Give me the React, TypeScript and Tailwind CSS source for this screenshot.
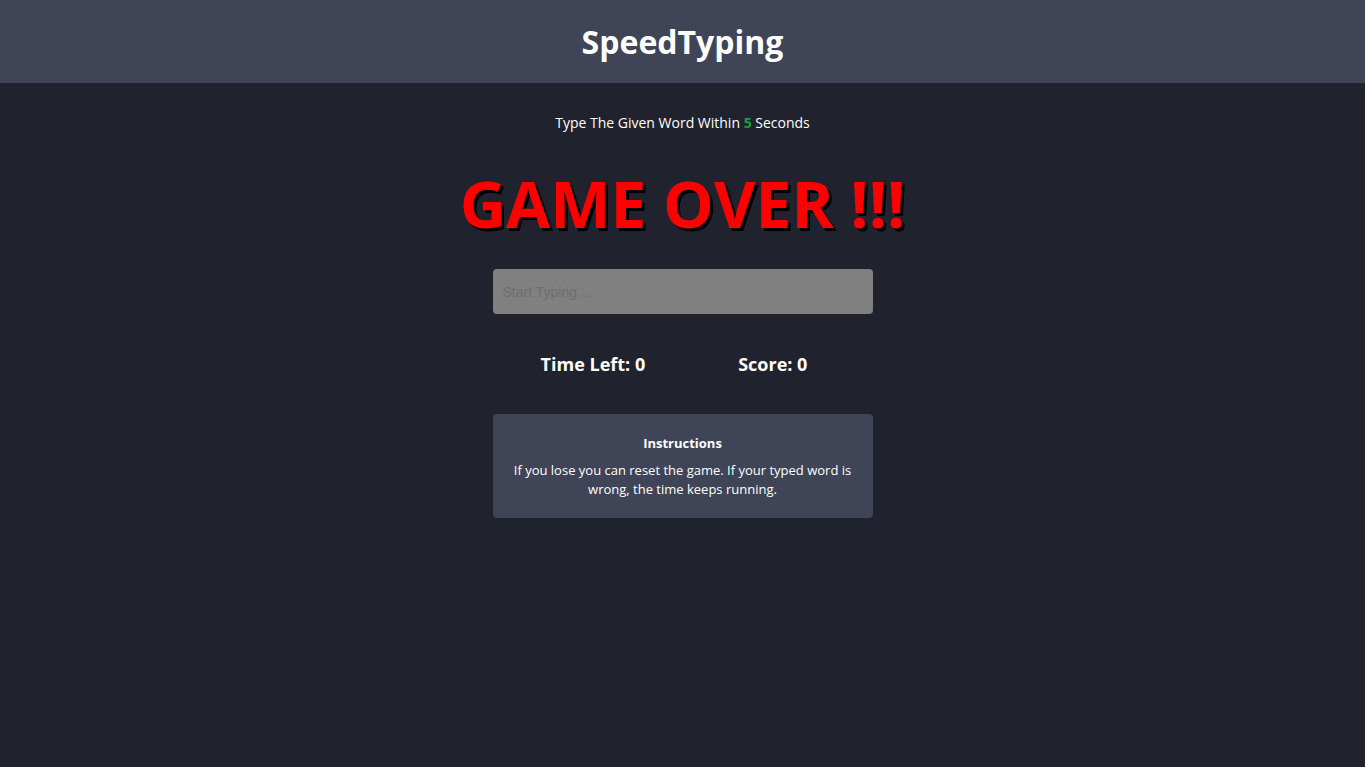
export default function App() {
  return (
    <div
      className="min-h-[767px] bg-[#20222e] text-white"
      style={{ fontFamily: '"Open Sans", sans-serif' }}
    >
      <header className="flex h-[83px] items-center justify-center bg-[#3f4457]">
        <h1 className="text-[32px] font-bold leading-none">SpeedTyping</h1>
      </header>
      <main className="flex flex-col items-center">
        <p className="mt-[31px] text-[14px] leading-[18px]">
          Type The Given Word Within <span className="font-bold text-[#16a33a]">5</span> Seconds
        </p>
        <h2 className="mt-[28px] text-[64px] font-bold leading-[87px] text-[#ff0000] [text-shadow:3px_3px_0_#000]">
          GAME OVER !!!
        </h2>
        <input
          className="mt-[22px] h-[45px] w-[380px] rounded-[4px] bg-[#808080] px-[10px] text-[14px] outline-none placeholder:text-[#6e6e6e]"
          style={{ fontFamily: '"Liberation Sans", Arial, sans-serif' }}
          placeholder="Start Typing ..."
        />
        <div className="mt-[38px] flex gap-[93px] pr-[17px] text-[18px] font-bold leading-[24px]">
          <span>Time Left: 0</span>
          <span>Score: 0</span>
        </div>
        <div className="mt-[38px] flex w-[380px] flex-col items-center rounded-[4px] bg-[#3f4457] px-[18px] pb-[19px] pt-[20px] text-center text-[13px]">
          <h3 className="font-bold leading-[18px]">Instructions</h3>
          <p className="mt-[9px] leading-[19px]">
            If you lose you can reset the game. If your typed word is wrong, the time keeps running.
          </p>
        </div>
      </main>
    </div>
  )
}
